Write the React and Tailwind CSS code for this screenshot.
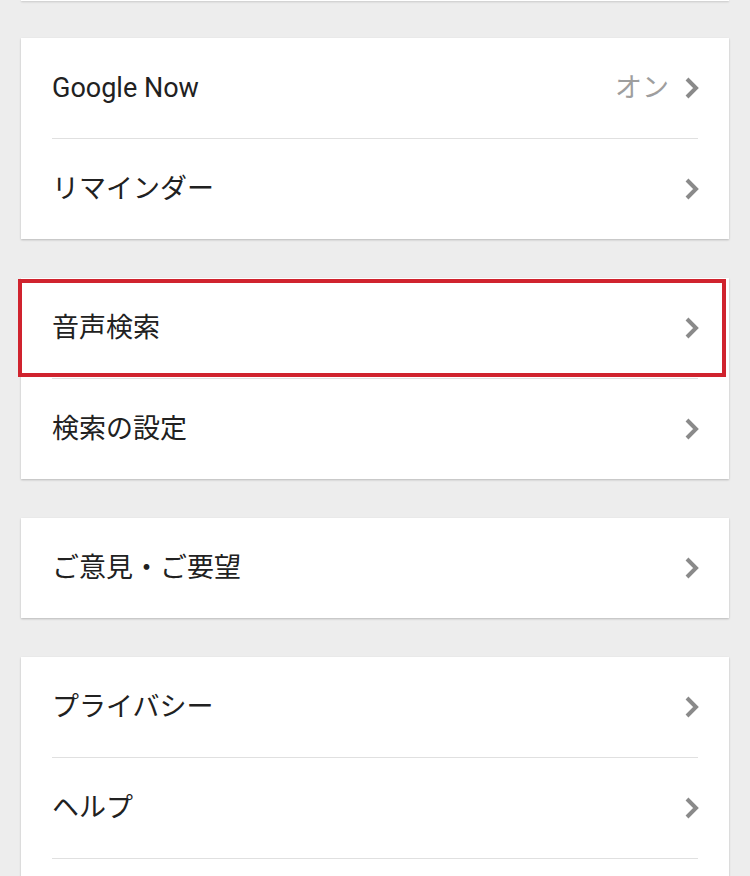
const font = { fontFamily: 'Roboto, "Noto Sans CJK JP", sans-serif' };

function Chevron() {
  return (
    <svg width="18" height="24" viewBox="0 0 18 24" className="shrink-0">
      <polyline points="4,3 13,12 4,21" fill="none" stroke="#8a8a8a" strokeWidth="4" />
    </svg>
  );
}

function Row({ label, value, highlight }) {
  return (
    <div className="relative flex h-[100px] items-center pl-[31px] pr-[28px]">
      <span className="flex-1 text-[27px] text-[#212121]">{label}</span>
      {value && <span className="mr-[14px] text-[27px] text-[#9e9e9e]">{value}</span>}
      {label && <Chevron />}
      {highlight && (
        <div className="absolute -left-[3px] right-[3px] top-[1px] bottom-[1px] border-[4px] border-[#d0232e]" />
      )}
    </div>
  );
}

function Card({ items }) {
  return (
    <div className="mb-[39px] bg-white shadow-[0_1px_2px_rgba(0,0,0,0.22)]">
      {items.map((item, i) => (
        <div key={i}>
          {i > 0 && <div className="mx-[31px] h-px bg-[#e0e0e0]" />}
          <Row {...item} />
        </div>
      ))}
    </div>
  );
}

export default function App() {
  const groups = [
    [{ label: "Google Now", value: "オン" }, { label: "リマインダー" }],
    [{ label: "音声検索", highlight: true }, { label: "検索の設定" }],
    [{ label: "ご意見・ご要望" }],
    [{ label: "プライバシー" }, { label: "ヘルプ" }, {}],
  ];

  return (
    <div className="h-[876px] overflow-hidden bg-[#ededed] px-[21px]" style={font}>
      <div className="mb-[37px] h-px bg-white shadow-[0_1px_2px_rgba(0,0,0,0.22)]" />
      {groups.map((items, i) => (
        <Card key={i} items={items} />
      ))}
    </div>
  );
}
